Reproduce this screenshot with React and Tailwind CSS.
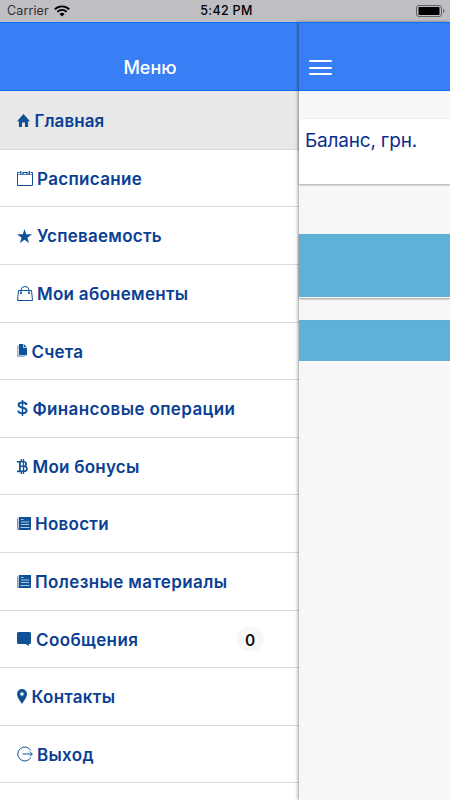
import React from 'react';

const HomeIcon = () => (
  <svg width="13" height="13" viewBox="0 0 13 13" fill="currentColor">
    <path d="M6.5 0 13 7.2H11.1V13H8V8.4H5V13H1.9V7.2H0Z" />
  </svg>
);

const CalendarIcon = () => (
  <svg width="16" height="15" viewBox="0 0 16 15" fill="none" stroke="currentColor">
    <path d="M2.5 1.5H.5v13h15v-13h-2M5.5 1.5h5" />
    <path d="M3.8 0v3.500M12.200 0v3.500M6 1.500v2M10 1.500v2" strokeWidth="1.300" />
    <path d="M1 3.500h14" strokeWidth="1" opacity=".6" />
  </svg>
);

const StarIcon = () => (
  <svg width="15" height="14" viewBox="0 0 15 14" fill="currentColor">
    <path d="M7.5 0 9.2 5.3H15L10.4 8.7 12.1 14 7.5 10.8 2.9 14 4.6 8.7 0 5.3H5.8Z" />
  </svg>
);

const BagIcon = () => (
  <svg width="16" height="15" viewBox="0 0 16 15" fill="none" stroke="currentColor">
    <path d="M1.5 4.5h13l1 10H.5ZM4 7V4.300a4 3.800 0 0 1 8 0V7" />
    <circle cx="4" cy="7.2" r=".6" fill="currentColor" />
    <circle cx="12" cy="7.2" r=".6" fill="currentColor" />
  </svg>
);

const DocumentsIcon = () => (
  <svg width="10" height="13" viewBox="0 0 10 13" fill="currentColor">
    <path d="M0 1.500h1.500v10.300H8V13H0Z" opacity=".45" />
    <path d="M2 0h4.300v4H10v7.300H2Z" />
    <path d="M7 .2 9.900 3.300H7Z" />
  </svg>
);

const DollarIcon = () => (
  <svg width="11" height="16" viewBox="0 0 11 16" fill="none" stroke="currentColor">
    <path
      d="M9.6 5C9.3 3.300 8 2.600 5.500 2.600 3 2.600 1.600 3.400 1.600 5c0 1.800 1.700 2.200 4 2.700 2.500.5 4 1.200 4 2.900 0 1.800-1.600 2.700-4.100 2.700-2.700 0-4.100-1-4.300-2.800"
      strokeWidth="2"
    />
    <path d="M5.5 0v16" strokeWidth="1.500" />
  </svg>
);

const BitcoinIcon = () => (
  <svg width="11" height="15" viewBox="0 0 11 15" fill="none" stroke="currentColor">
    <path
      d="M0 2.700h6.300c2 0 2.900.8 2.900 2.200S8.300 7.200 6.500 7.200H3M6.500 7.200c2.300 0 3.500.9 3.500 2.600s-1.200 2.600-3.500 2.600H0"
      strokeWidth="1.600"
    />
    <path d="M2.900 2.500v10" strokeWidth="1.800" />
    <path d="M4.300 0v2.500M4.300 12.500V15M6.500 0v15" strokeWidth="1.300" />
  </svg>
);

const PaperIcon = () => (
  <svg width="14" height="13" viewBox="0 0 14 13" fill="currentColor">
    <path d="M0 1.500h1.200V11.500L0 13Z" opacity=".6" />
    <path d="M1.800 0H14v12q0 1-1 1H.8q1-.5 1-2Z" />
    <path d="M4 2.500h2.500M4 5h8M4 7.500h8M3.500 10.500h9" stroke="#fff" strokeWidth=".9" opacity=".75" />
  </svg>
);

const ChatIcon = () => (
  <svg width="14" height="14" viewBox="0 0 14 14" fill="currentColor">
    <path d="M1.500 0h11Q14 0 14 1.500v9q0 1.500-1.500 1.500h-.7v2L8.600 12H1.500Q0 12 0 10.500v-9Q0 0 1.500 0Z" />
  </svg>
);

const PinIcon = () => (
  <svg width="10" height="15" viewBox="0 0 10 15" fill="currentColor" fillRule="evenodd">
    <path d="M5 0a5 5 0 0 1 5 5c0 3.500-3.300 7-5 10C3.300 12 0 8.500 0 5a5 5 0 0 1 5-5Zm0 3.200a1.800 1.800 0 1 0 0 3.600 1.800 1.800 0 0 0 0-3.600Z" />
  </svg>
);

const ExitIcon = () => (
  <svg width="16" height="16" viewBox="0 0 16 16" fill="none" stroke="currentColor">
    <path d="M13.700 4.300a7 7 0 1 0 0 7.400" />
    <path d="M5.500 8h9.800M12.700 5.500 15.300 8l-2.600 2.500" />
  </svg>
);

const WifiIcon = () => (
  <svg width="16" height="12" viewBox="0 0 16 12" fill="none" stroke="#000">
    <path d="M.8 4.300a10.300 10.300 0 0 1 14.400 0M3.300 6.900a6.700 6.700 0 0 1 9.400 0" strokeWidth="1.800" />
    <path d="M8 11.500 5.500 9a3.600 3.600 0 0 1 5 0Z" fill="#000" stroke="none" />
  </svg>
);

const BatteryIcon = () => (
  <svg width="29" height="12" viewBox="0 0 29 12" fill="none">
    <rect x=".5" y=".5" width="25" height="11" rx="2.5" stroke="#5f5f63" />
    <rect x="2.5" y="2" width="21" height="8" rx=".7" fill="#000" />
    <path d="M27 4v4q1.500-.5 1.500-2T27 4Z" fill="#69696d" />
  </svg>
);

const MENU = [
  { title: 'Главная', icon: HomeIcon, slot: 'w-[17.5px]', spacing: 'tracking-[0.05px]', active: true },
  { title: 'Расписание', icon: CalendarIcon, slot: 'w-[20px]', spacing: 'tracking-[0.33px]' },
  { title: 'Успеваемость', icon: StarIcon, slot: 'w-[20px]', spacing: 'tracking-[0.26px]' },
  { title: 'Мои абонементы', icon: BagIcon, slot: 'w-[20px]', spacing: 'tracking-[0.28px]' },
  { title: 'Счета', icon: DocumentsIcon, slot: 'w-[14.5px]', spacing: 'tracking-[0.2px]' },
  { title: 'Финансовые операции', icon: DollarIcon, slot: 'w-[15.5px]', spacing: 'tracking-[0.38px]' },
  { title: 'Мои бонусы', icon: BitcoinIcon, slot: 'w-[15.5px]', spacing: 'tracking-[0.24px]' },
  { title: 'Новости', icon: PaperIcon, slot: 'w-[18px]', spacing: 'tracking-[0.26px]' },
  { title: 'Полезные материалы', icon: PaperIcon, slot: 'w-[18px]', spacing: 'tracking-[0.38px]' },
  { title: 'Сообщения', icon: ChatIcon, slot: 'w-[19px]', spacing: 'tracking-[0.4px]', badge: 0 },
  { title: 'Контакты', icon: PinIcon, slot: 'w-[14.5px]', spacing: 'tracking-[0.26px]' },
  { title: 'Выход', icon: ExitIcon, slot: 'w-[20px]', spacing: 'tracking-[0.3px]' }
];

const StatusBar = () => (
  <div className="grid h-[22px] shrink-0 grid-cols-3 items-center bg-[#bfbec3] pl-[7px] pr-[5px] text-[12.5px] leading-none">
    <div className="flex items-center gap-[5px] text-[#303033]">
      <span className="pt-px tracking-[0.12px]">Carrier</span>
      <WifiIcon />
    </div>
    <span className="pl-px pt-px text-center font-medium tracking-[0.3px] text-black">5:42 PM</span>
    <div className="flex justify-end">
      <BatteryIcon />
    </div>
  </div>
);

const MenuItem = ({ item }) => {
  const Icon = item.icon;
  return (
    <li
      className={`flex h-[57.6px] items-center border-b border-[#d9d9d9] pl-[17px] pr-[35px] ${
        item.active ? 'bg-[#e8e8e8]' : 'bg-white'
      }`}
    >
      <span className={`flex shrink-0 text-[#0f5298] ${item.slot}`}>
        <Icon />
      </span>
      <span className={`whitespace-nowrap pt-[3px] text-[17px] font-semibold text-[#0a4094] ${item.spacing}`}>
        {item.title}
      </span>
      {item.badge !== undefined && (
        <span className="mt-px ml-auto flex h-6 w-7 items-center justify-center rounded-full bg-[#f7f7f7] pt-[2px] text-[15.5px] font-semibold text-[#111]">
          {item.badge}
        </span>
      )}
    </li>
  );
};

const App = () => {
  return (
    <div className="flex h-[800px] w-[450px] flex-col overflow-hidden bg-white font-['Inter','Liberation_Sans',sans-serif]">
      <StatusBar />
      <div className="flex min-h-0 flex-1">
        {/* Side menu */}
        <aside className="w-[299px] shrink-0">
          <header className="flex h-[69px] items-end justify-center border-y border-[#0c71fb] bg-[#387ef5] pb-[9px] pl-px text-[18px] font-medium text-white">
            Меню
          </header>
          <ul className="bg-[#e8e8e8] pt-[1.2px]">
            {MENU.map((item) => (
              <MenuItem key={item.title} item={item} />
            ))}
            <li className="h-5 bg-white" />
          </ul>
        </aside>

        {/* Visible part of the page */}
        <main className="relative flex flex-1 flex-col bg-[#f7f7f7] shadow-[-1px_0_3px_rgba(0,0,0,0.4)]">
          <header className="flex h-[69px] shrink-0 items-end border-y border-[#0c71fb] bg-[#387ef5] pb-[15px] pl-[10px]">
            <div className="flex w-[23px] flex-col gap-[4.5px]">
              <span className="h-[2px] rounded-full bg-white" />
              <span className="h-[2px] rounded-full bg-white" />
              <span className="h-[2px] rounded-full bg-white" />
            </div>
          </header>
          <section className="mt-[28px] h-[64.5px] bg-white pl-[6px] pt-[8px] text-[19px] leading-[28px] tracking-[-0.2px] text-[#0a2e8c] shadow-[0_1px_2px_rgba(0,0,0,0.35)]">
            Баланс, грн.
          </section>
          <section className="mt-[50.5px] h-[63.5px] border-b border-white bg-[#60b1d8] shadow-[0_1px_2px_rgba(0,0,0,0.4)]" />
          <section className="mt-[22px] h-[41px] border-t border-[#5aaed3] bg-[#60b1d8]" />
        </main>
      </div>
    </div>
  );
};

export default App;
